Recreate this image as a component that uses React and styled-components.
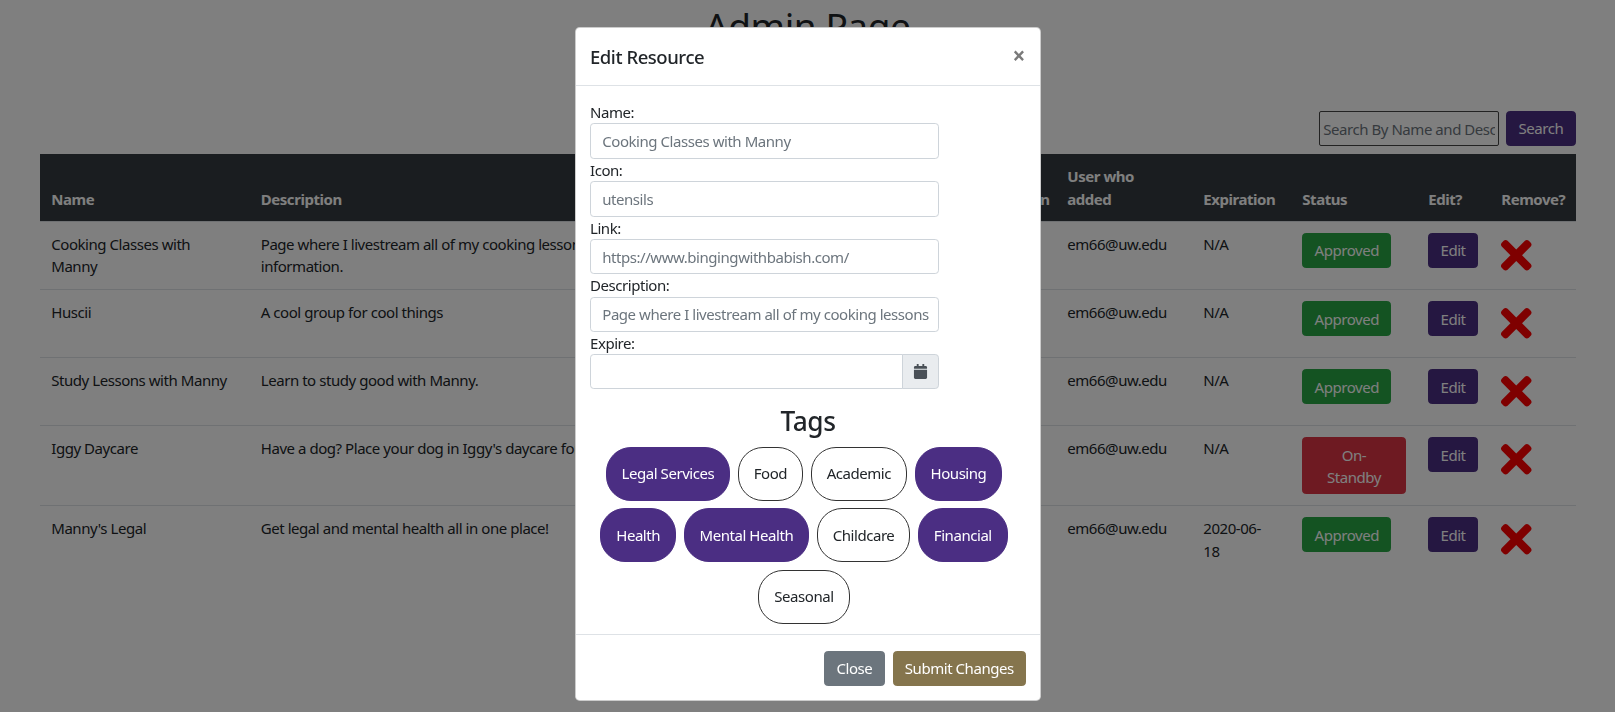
import React from "react";
import styled, { createGlobalStyle } from "styled-components";
import { FaTimes, FaCalendar } from "react-icons/fa";

const GlobalStyle = createGlobalStyle`
  html, body {
    margin: 0;
    padding: 0;
    background: #fff;
    overflow: hidden;
  }
  body {
    font-family: "Noto Sans", "Open Sans", sans-serif;
    font-size: 15px;
    line-height: 1.5;
    letter-spacing: -0.45px;
    color: #212529;
  }
  * {
    box-sizing: border-box;
  }
`;

const Page = styled.div`
  height: 712px;
  padding: 3px 39.5px 0 40px;
`;

const Heading = styled.h1`
  margin: 0 0 63px;
  font-size: 37px;
  font-weight: 400;
  line-height: 45px;
  text-align: center;
`;

const SearchBar = styled.form`
  display: flex;
  justify-content: flex-end;
  gap: 7px;
  margin-bottom: 8px;
`;

const SearchInput = styled.input`
  width: 180px;
  height: 35px;
  padding: 0 3px;
  border: 1px solid #444;
  border-radius: 2px;
  font: inherit;
  letter-spacing: inherit;
  &::placeholder {
    color: #6c757d;
  }
`;

const Button = styled.button`
  display: inline-block;
  width: ${(p) => (p.$wide ? "100%" : "auto")};
  padding: 5.25px 11.25px;
  border: 1px solid ${(p) => p.$color};
  border-radius: 3.75px;
  background: ${(p) => p.$color};
  color: #fff;
  font: inherit;
  line-height: ${(p) => (p.$wide ? "22px" : "22.5px")};
  letter-spacing: inherit;
  text-align: center;
  white-space: nowrap;
`;

const Table = styled.table`
  width: 100%;
  table-layout: fixed;
  border-collapse: collapse;
`;

const Head = styled.th`
  padding: 11.25px 11.25px 10.25px;
  background: #343a40;
  color: #fff;
  font-weight: 700;
  text-align: left;
  vertical-align: bottom;
  white-space: pre-line;
`;

const Cell = styled.td`
  padding: 11.25px;
  border-top: 1px solid #dee2e6;
  text-align: left;
  vertical-align: top;
  overflow: hidden;
  white-space: ${(p) => (p.$nowrap ? "nowrap" : "normal")};
`;

const RemoveIcon = styled(FaTimes)`
  display: block;
  width: 44.5px;
  height: 44.5px;
  margin-left: -7px;
  color: #f00;
`;

const Backdrop = styled.div`
  position: fixed;
  inset: 0;
  background: rgba(0, 0, 0, 0.5);
`;

const Modal = styled.div`
  position: fixed;
  top: 27px;
  left: 575px;
  width: 466px;
  height: 674px;
  display: flex;
  flex-direction: column;
  background: #fff;
  border: 1px solid rgba(0, 0, 0, 0.2);
  border-radius: 4.8px;
`;

const ModalHeader = styled.div`
  display: flex;
  justify-content: space-between;
  align-items: center;
  height: 58px;
  padding: 0 15px 0 14px;
  border-bottom: 1px solid #dee2e6;
`;

const ModalTitle = styled.h5`
  margin: 0;
  font-size: 18.5px;
  font-weight: 500;
`;

const CloseX = styled.span`
  font-size: 22.5px;
  font-weight: 700;
  line-height: 1;
  color: #7a7a7a;
`;

const ModalBody = styled.div`
  flex: 1;
  padding: 15px 14px 0;
`;

const Field = styled.div`
  width: 349px;
`;

const Label = styled.label`
  display: block;
  line-height: 22.25px;
`;

const TextInput = styled.input`
  display: block;
  width: 100%;
  height: 35.5px;
  padding: 0 6px 0 11.25px;
  border: 1px solid #ced4da;
  border-radius: 3.75px;
  font: inherit;
  letter-spacing: inherit;
  color: #495057;
  &::placeholder {
    color: #6c757d;
  }
`;

const InputGroup = styled.div`
  display: flex;
  height: 35px;
`;

const DateInput = styled(TextInput)`
  flex: 1;
  height: 100%;
  border-radius: 3.75px 0 0 3.75px;
`;

const InputAppend = styled.span`
  display: flex;
  align-items: center;
  justify-content: center;
  width: 37px;
  margin-left: -1px;
  background: #e9ecef;
  border: 1px solid #ced4da;
  border-radius: 0 3.75px 3.75px 0;
  color: #495057;
  font-size: 15px;
`;

const TagsTitle = styled.h3`
  margin: 17px 0 5px;
  font-size: 26.25px;
  font-weight: 500;
  line-height: 31.5px;
  text-align: center;
`;

const TagList = styled.div`
  display: flex;
  flex-wrap: wrap;
  justify-content: center;
  margin-right: 8px;
`;

const Tag = styled.button`
  height: 54px;
  margin: 3.75px;
  padding: 0 15px;
  border: 1px solid ${(p) => (p.$active ? "#4b2e83" : "#333")};
  border-radius: 25px;
  background: ${(p) => (p.$active ? "#4b2e83" : "#fff")};
  color: ${(p) => (p.$active ? "#fff" : "#212529")};
  font: inherit;
  letter-spacing: inherit;
`;

const ModalFooter = styled.div`
  display: flex;
  justify-content: flex-end;
  gap: 8px;
  padding: 16px 14px 14px;
  border-top: 1px solid #dee2e6;
`;

const columns = [209.5, 707.5, 99, 136, 99, 126, 73, 85.5];

const Col = styled.col`
  width: ${(p) => p.$w}px;
`;

const headers = ["Name", "Description", "Verification", "User who\nadded", "Expiration", "Status", "Edit?", "Remove?"];

const rows = [
  {
    name: ["Cooking Classes with", <br key="b" />, "Manny"],
    description: ["Page where I livestream all of my cooking lessons. Contact for more", <br key="b" />, "information."],
    expiration: "N/A",
    status: "Approved",
  },
  { name: "Huscii", description: "A cool group for cool things", expiration: "N/A", status: "Approved" },
  { name: "Study Lessons with Manny", description: "Learn to study good with Manny.", expiration: "N/A", status: "Approved" },
  {
    name: "Iggy Daycare",
    description: "Have a dog? Place your dog in Iggy's daycare for the day.",
    expiration: "N/A",
    status: "On-Standby",
  },
  {
    name: "Manny's Legal",
    description: "Get legal and mental health all in one place!",
    expiration: ["2020-06-", <br key="b" />, "18"],
    status: "Approved",
  },
];

const tags = [
  ["Legal Services", true],
  ["Food", false],
  ["Academic", false],
  ["Housing", true],
  ["Health", true],
  ["Mental Health", true],
  ["Childcare", false],
  ["Financial", true],
  ["Seasonal", false],
];

const fields = [
  ["Name:", "Cooking Classes with Manny"],
  ["Icon:", "utensils"],
  ["Link:", "https://www.bingingwithbabish.com/"],
  ["Description:", "Page where I livestream all of my cooking lessons"],
];

function Status({ value }) {
  if (value === "Approved") return <Button $color="#28a745">Approved</Button>;
  return (
    <Button $color="#dc3545" $wide>
      On-
      <br />
      Standby
    </Button>
  );
}

export default function App() {
  return (
    <>
      <GlobalStyle />
      <Page>
        <Heading>Admin Page</Heading>
        <SearchBar>
          <SearchInput placeholder="Search By Name and Description" />
          <Button $color="#4b2e83">Search</Button>
        </SearchBar>
        <Table>
          <colgroup>
            {columns.map((w, i) => (
              <Col key={i} $w={w} />
            ))}
          </colgroup>
          <thead>
            <tr>
              {headers.map((h) => (
                <Head key={h}>{h}</Head>
              ))}
            </tr>
          </thead>
          <tbody>
            {rows.map((r, i) => (
              <tr key={i}>
                <Cell>{r.name}</Cell>
                <Cell $nowrap>{r.description}</Cell>
                <Cell />
                <Cell>em66@uw.edu</Cell>
                <Cell>{r.expiration}</Cell>
                <Cell>
                  <Status value={r.status} />
                </Cell>
                <Cell>
                  <Button $color="#4b2e83">Edit</Button>
                </Cell>
                <Cell>
                  <RemoveIcon />
                </Cell>
              </tr>
            ))}
          </tbody>
        </Table>
      </Page>
      <Backdrop />
      <Modal>
        <ModalHeader>
          <ModalTitle>Edit Resource</ModalTitle>
          <CloseX>×</CloseX>
        </ModalHeader>
        <ModalBody>
          {fields.map(([label, value]) => (
            <Field key={label}>
              <Label>{label}</Label>
              <TextInput placeholder={value} />
            </Field>
          ))}
          <Field>
            <Label>Expire:</Label>
            <InputGroup>
              <DateInput />
              <InputAppend>
                <FaCalendar />
              </InputAppend>
            </InputGroup>
          </Field>
          <TagsTitle>Tags</TagsTitle>
          <TagList>
            {tags.map(([name, active]) => (
              <Tag key={name} $active={active}>
                {name}
              </Tag>
            ))}
          </TagList>
        </ModalBody>
        <ModalFooter>
          <Button $color="#6c757d">Close</Button>
          <Button $color="#85754d">Submit Changes</Button>
        </ModalFooter>
      </Modal>
    </>
  );
}
